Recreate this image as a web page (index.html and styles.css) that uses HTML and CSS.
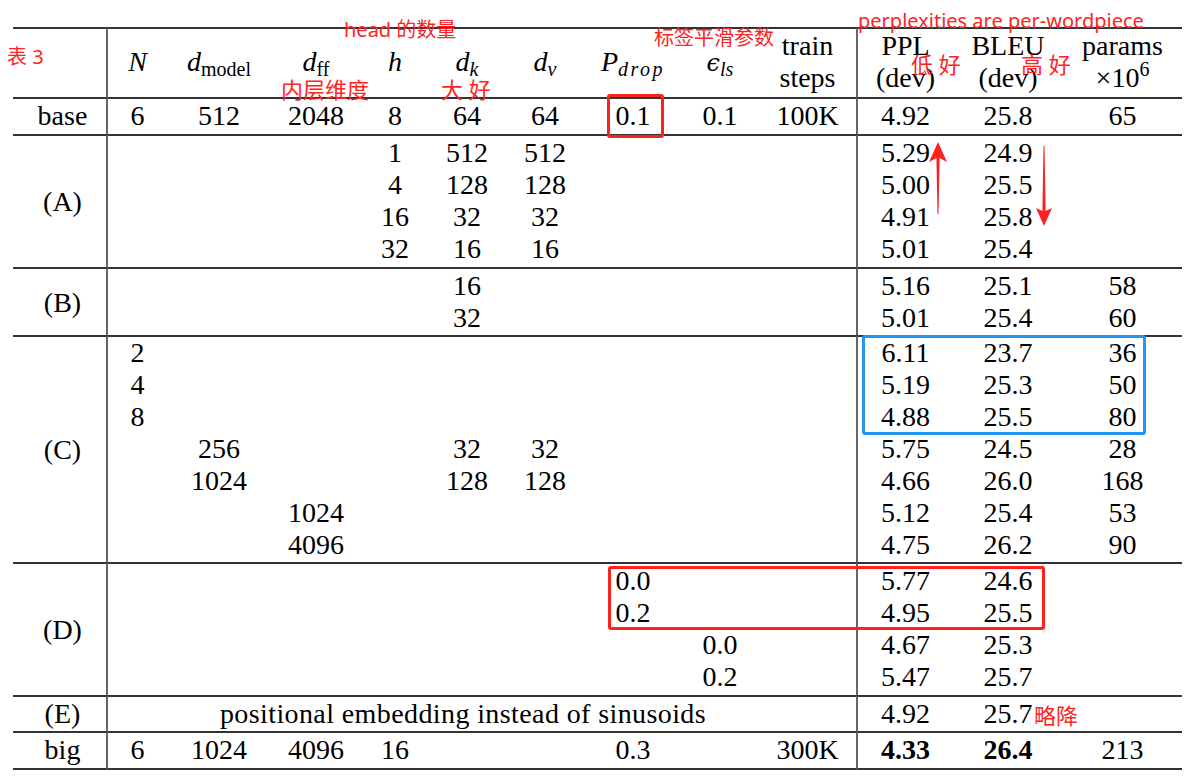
FILE: index.html
```html
<!DOCTYPE html>
<html lang="zh">
<head>
<meta charset="utf-8">
<title>Table 3</title>
<link rel="stylesheet" href="styles.css">
</head>
<body>
<div class="page">
  <table class="tbl">
    <colgroup>
      <col class="c-lab"><col class="c-n"><col class="c-dm"><col class="c-dff"><col class="c-h"><col class="c-dk"><col class="c-dv"><col class="c-p"><col class="c-e"><col class="c-st"><col class="c-ppl"><col class="c-bleu"><col class="c-par">
    </colgroup>
    <thead>
      <tr>
        <th class="lab"></th>
        <th><i>N</i></th>
        <th><i>d</i><span class="sub">model</span></th>
        <th><i>d</i><span class="sub">ff</span></th>
        <th><i>h</i></th>
        <th><i>d</i><span class="sub it">k</span></th>
        <th><i>d</i><span class="sub it">v</span></th>
        <th><i>P</i><span class="sub it wide">drop</span></th>
        <th><span class="eps">ϵ</span><span class="sub it">ls</span></th>
        <th class="vr">train<br>steps</th>
        <th>PPL<br>(dev)</th>
        <th>BLEU<br>(dev)</th>
        <th>params<br>×10<span class="sup">6</span></th>
      </tr>
    </thead>
    <tbody class="grp">
      <tr><td class="lab">base</td><td>6</td><td>512</td><td>2048</td><td>8</td><td>64</td><td>64</td><td>0.1</td><td>0.1</td><td class="vr">100K</td><td>4.92</td><td>25.8</td><td>65</td></tr>
    </tbody>
    <tbody class="grp">
      <tr><td class="lab" rowspan="4">(A)</td><td></td><td></td><td></td><td>1</td><td>512</td><td>512</td><td></td><td></td><td class="vr"></td><td>5.29</td><td>24.9</td><td></td></tr>
      <tr><td></td><td></td><td></td><td>4</td><td>128</td><td>128</td><td></td><td></td><td class="vr"></td><td>5.00</td><td>25.5</td><td></td></tr>
      <tr><td></td><td></td><td></td><td>16</td><td>32</td><td>32</td><td></td><td></td><td class="vr"></td><td>4.91</td><td>25.8</td><td></td></tr>
      <tr><td></td><td></td><td></td><td>32</td><td>16</td><td>16</td><td></td><td></td><td class="vr"></td><td>5.01</td><td>25.4</td><td></td></tr>
    </tbody>
    <tbody class="grp tight">
      <tr><td class="lab" rowspan="2">(B)</td><td></td><td></td><td></td><td></td><td>16</td><td></td><td></td><td></td><td class="vr"></td><td>5.16</td><td>25.1</td><td>58</td></tr>
      <tr><td></td><td></td><td></td><td></td><td>32</td><td></td><td></td><td></td><td class="vr"></td><td>5.01</td><td>25.4</td><td>60</td></tr>
    </tbody>
    <tbody class="grp snug">
      <tr><td class="lab" rowspan="7">(C)</td><td>2</td><td></td><td></td><td></td><td></td><td></td><td></td><td></td><td class="vr"></td><td>6.11</td><td>23.7</td><td>36</td></tr>
      <tr><td>4</td><td></td><td></td><td></td><td></td><td></td><td></td><td></td><td class="vr"></td><td>5.19</td><td>25.3</td><td>50</td></tr>
      <tr><td>8</td><td></td><td></td><td></td><td></td><td></td><td></td><td></td><td class="vr"></td><td>4.88</td><td>25.5</td><td>80</td></tr>
      <tr><td></td><td>256</td><td></td><td></td><td>32</td><td>32</td><td></td><td></td><td class="vr"></td><td>5.75</td><td>24.5</td><td>28</td></tr>
      <tr><td></td><td>1024</td><td></td><td></td><td>128</td><td>128</td><td></td><td></td><td class="vr"></td><td>4.66</td><td>26.0</td><td>168</td></tr>
      <tr><td></td><td></td><td>1024</td><td></td><td></td><td></td><td></td><td></td><td class="vr"></td><td>5.12</td><td>25.4</td><td>53</td></tr>
      <tr><td></td><td></td><td>4096</td><td></td><td></td><td></td><td></td><td></td><td class="vr"></td><td>4.75</td><td>26.2</td><td>90</td></tr>
    </tbody>
    <tbody class="grp">
      <tr><td class="lab" rowspan="4">(D)</td><td></td><td></td><td></td><td></td><td></td><td></td><td>0.0</td><td></td><td class="vr"></td><td>5.77</td><td>24.6</td><td></td></tr>
      <tr><td></td><td></td><td></td><td></td><td></td><td></td><td>0.2</td><td></td><td class="vr"></td><td>4.95</td><td>25.5</td><td></td></tr>
      <tr><td></td><td></td><td></td><td></td><td></td><td></td><td></td><td>0.0</td><td class="vr"></td><td>4.67</td><td>25.3</td><td></td></tr>
      <tr><td></td><td></td><td></td><td></td><td></td><td></td><td></td><td>0.2</td><td class="vr"></td><td>5.47</td><td>25.7</td><td></td></tr>
    </tbody>
    <tbody class="grp tight">
      <tr><td class="lab">(E)</td><td class="vr span-e" colspan="9">positional embedding instead of sinusoids</td><td>4.92</td><td>25.7</td><td></td></tr>
    </tbody>
    <tbody class="grp last">
      <tr><td class="lab">big</td><td>6</td><td>1024</td><td>4096</td><td>16</td><td></td><td></td><td>0.3</td><td></td><td class="vr">300K</td><td><b>4.33</b></td><td><b>26.4</b></td><td>213</td></tr>
    </tbody>
  </table>

  <span class="note n-biao">表 3</span>
  <span class="note n-head">head 的数量</span>
  <span class="note n-nei">内层维度</span>
  <span class="note n-da">大 好</span>
  <span class="note n-biaoqian">标签平滑参数</span>
  <span class="note n-ppw">perplexities are per-wordpiece</span>
  <span class="note n-di">低 好</span>
  <span class="note n-gao">高 好</span>
  <span class="note n-lue">略降</span>

  <div class="box box-base"></div>
  <div class="box box-d"></div>
  <div class="box blue box-c"></div>

  <svg class="arrows" width="1200" height="779" viewBox="0 0 1200 779">
    <polygon points="938,142 947,162 939.6,158 938.5,214 937.5,214 936.4,158 929,162" fill="#ff1f1f"/>
    <polygon points="1043.5,146 1044.5,146 1045.6,211 1052,208 1044,226 1036,208 1042.4,211" fill="#ff1f1f"/>
  </svg>
</div>
</body>
</html>
```

FILE: styles.css
```css
* { box-sizing: border-box; }

html, body {
  margin: 0;
  padding: 0;
  background: #fff;
}

.page {
  position: relative;
  width: 1200px;
  height: 779px;
  overflow: hidden;
  padding: 27px 0 0 13px;
}

.tbl {
  border-collapse: separate;
  border-spacing: 0;
  table-layout: fixed;
  width: 1169px;
  font-family: "Liberation Serif", "Times New Roman", serif;
  font-size: 28px;
  line-height: 32px;
  color: #000;
}

.c-lab { width: 95px; }
.c-n { width: 59px; }
.c-dm { width: 104px; }
.c-dff { width: 90px; }
.c-h { width: 68px; }
.c-dk { width: 76px; }
.c-dv { width: 80px; }
.c-p { width: 96px; }
.c-e { width: 78px; }
.c-st { width: 99px; }
.c-ppl { width: 95px; }
.c-bleu { width: 110px; }
.c-par { width: 119px; }

.tbl th,
.tbl td {
  padding: 0;
  text-align: center;
  font-weight: normal;
  white-space: nowrap;
  vertical-align: middle;
}

.tbl thead th {
  border-top: 2px solid #333;
  padding-top: 1px;
  padding-bottom: 3px;
}

.tbl .lab {
  border-right: 2px solid #666;
  padding-left: 6px;
}

.tbl .vr {
  border-right: 2px solid #666;
}

.grp > tr:first-child > td {
  border-top: 2px solid #333;
  padding-top: 1px;
}

.grp > tr:last-child > td {
  padding-bottom: 2px;
}

.grp.tight > tr:last-child > td { padding-bottom: 1px; }
.grp.snug > tr:first-child > td { padding-top: 0; }
.grp.snug > tr:last-child > td { padding-bottom: 1px; }

.grp.last > tr:last-child > td {
  border-bottom: 2px solid #333;
}

.tbl .span-e {
  padding-right: 38px;
  letter-spacing: 0.4px;
}

.tbl b { font-weight: bold; }

.sub {
  font-size: 20px;
  line-height: 0;
  vertical-align: -5px;
}
.sub.it { font-style: italic; }
.sub.wide { letter-spacing: 2.5px; }

.sup {
  font-size: 20px;
  line-height: 0;
  vertical-align: 11px;
}

.eps {
  font-family: "DejaVu Serif", serif;
  font-style: italic;
  font-size: 24px;
}

/* annotations */
.note {
  position: absolute;
  color: #ff2323;
  font-family: "Noto Sans", "Noto Sans CJK SC", sans-serif;
  line-height: 1;
  white-space: nowrap;
}

.n-biao { left: 7px; top: 47px; font-size: 20px; }
.n-head { left: 344px; top: 20px; font-size: 20px; }
.n-nei { left: 281px; top: 78px; font-size: 22px; }
.n-da { left: 441px; top: 78px; font-size: 22px; }
.n-biaoqian { left: 654px; top: 28px; font-size: 20px; }
.n-ppw { left: 858px; top: 11px; font-size: 20px; }
.n-di { left: 911px; top: 53px; font-size: 22px; }
.n-gao { left: 1021px; top: 53px; font-size: 22px; }
.n-lue { left: 1034px; top: 704px; font-size: 22px; }

.box {
  position: absolute;
  border: 3px solid #ff2020;
  border-radius: 3px;
}
.box.blue { border-color: #2196f3; }

.box-base { left: 607px; top: 94px; width: 57px; height: 44px; }
.box-d { left: 608px; top: 566px; width: 437px; height: 64px; }
.box-c { left: 862px; top: 335px; width: 284px; height: 100px; }

.arrows {
  position: absolute;
  left: 0;
  top: 0;
  pointer-events: none;
}
```
